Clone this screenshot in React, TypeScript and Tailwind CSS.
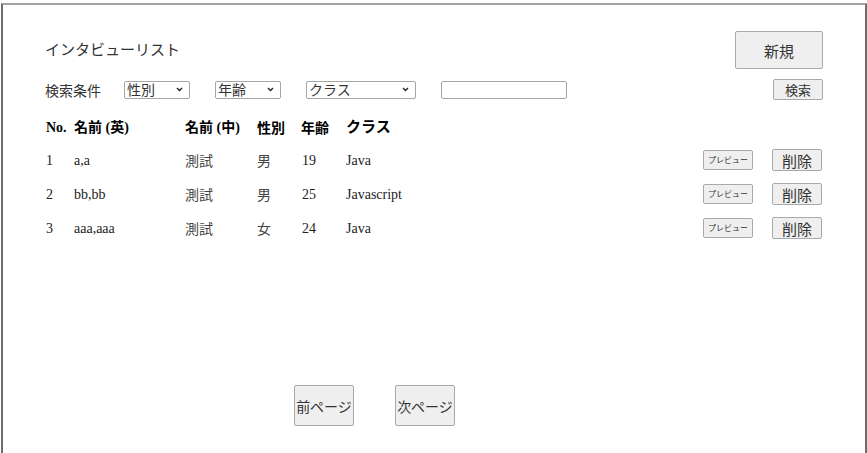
import React from 'react';

interface Row {
  no: number;
  en: string;
  zh: string;
  sex: string;
  age: number;
  cls: string;
}

const rows: Row[] = [
  { no: 1, en: 'a,a', zh: '測試', sex: '男', age: 19, cls: 'Java' },
  { no: 2, en: 'bb,bb', zh: '測試', sex: '男', age: 25, cls: 'Javascript' },
  { no: 3, en: 'aaa,aaa', zh: '測試', sex: '女', age: 24, cls: 'Java' },
];

const sans = "font-['Noto_Sans_CJK_JP','Liberation_Sans',sans-serif]";
const serif = "font-['Liberation_Serif','Noto_Sans_CJK_JP',serif]";
const btn =
  'flex items-center justify-center bg-[#efefef] border border-[#a9a9a9] rounded-[2px] text-[#333] leading-none';

const FakeSelect: React.FC<{ label: string; width: string }> = ({ label, width }) => (
  <div
    className={`${width} h-[18px] flex items-center justify-between border border-[#a6a6a6] rounded-[2px] bg-white pl-[2px] pr-[6px] text-[14px] leading-none text-[#333]`}
  >
    <span className="-mt-[1px]">{label}</span>
    <svg width="7" height="5" viewBox="0 0 7 5">
      <path d="M1 1 L3.5 3.5 L6 1" fill="none" stroke="#222" strokeWidth="1.4" />
    </svg>
  </div>
);

const App: React.FC = () => {
  return (
    <div className="w-[867px] h-[453px] overflow-hidden bg-white">
      <div
        className={`ml-[1px] mt-[3px] w-[866px] h-[460px] border-t-2 border-t-[#a3a3a3] border-l-2 border-l-[#6e6e6e] border-r-2 border-r-[#6e6e6e] pl-[42px] pr-[42px] pt-[26px] ${sans}`}
      >
        {/* title row */}
        <div className="flex items-center justify-between h-[38px]">
          <h1 className="text-[15px] text-[#333] leading-none -mt-[3px]">インタビューリスト</h1>
          <button className={`${btn} w-[88px] h-[38px] text-[15px]`}>新規</button>
        </div>

        {/* search row */}
        <div className="flex items-center h-[21px] mt-[10px] text-[14px] text-[#333]">
          <span className="w-[79px] leading-none">検索条件</span>
          <FakeSelect label="性別" width="w-[66px]" />
          <div className="w-[25px]" />
          <FakeSelect label="年齢" width="w-[66px]" />
          <div className="w-[25px]" />
          <FakeSelect label="クラス" width="w-[110px]" />
          <div className="w-[25px]" />
          <input className="w-[126px] h-[18px] border border-[#a6a6a6] rounded-[2px] bg-white" />
          <button className={`${btn} ml-auto w-[50px] h-[21px] text-[13px]`}>検索</button>
        </div>

        {/* header */}
        <div className="grid grid-cols-[29px_111px_72px_44px_44px_1fr] items-center h-[20px] mt-[17px] text-[14px] text-black font-bold">
          <span className={`${serif} pl-[1px]`}>No.</span>
          <span className={serif}>名前 (英)</span>
          <span className={serif}>名前 (中)</span>
          <span>性別</span>
          <span>年齢</span>
          <span className="text-[15px] -mt-[3px] pl-[1px]">クラス</span>
        </div>

        {/* rows */}
        <div className="mt-[6px] flex flex-col">
          {rows.map((r) => (
            <div key={r.no} className="flex items-center h-[34px]">
              <div className={`grid grid-cols-[29px_111px_72px_44px_44px_1fr] flex-1 items-center text-[14px] text-[#222] ${serif}`}>
                <span className="pl-[1px]">{r.no}</span>
                <span>{r.en}</span>
                <span className={`${sans} text-[#444]`}>{r.zh}</span>
                <span className={`${sans} text-[#444]`}>{r.sex}</span>
                <span className="pl-[1px]">{r.age}</span>
                <span className="pl-[1px]">{r.cls}</span>
              </div>
              <button className={`${btn} w-[50px] h-[20px] text-[8px] ${sans}`}>プレビュー</button>
              <button className={`${btn} ml-[19px] mr-[1px] w-[50px] h-[22px] text-[15px] ${sans}`}>削除</button>
            </div>
          ))}
        </div>

        {/* pagination */}
        <div className="flex mt-[140px] pl-[249px] gap-[41px]">
          <button className={`${btn} w-[60px] h-[41px] text-[14px]`}>前ページ</button>
          <button className={`${btn} w-[60px] h-[41px] text-[14px]`}>次ページ</button>
        </div>
      </div>
    </div>
  );
};

export default App;
